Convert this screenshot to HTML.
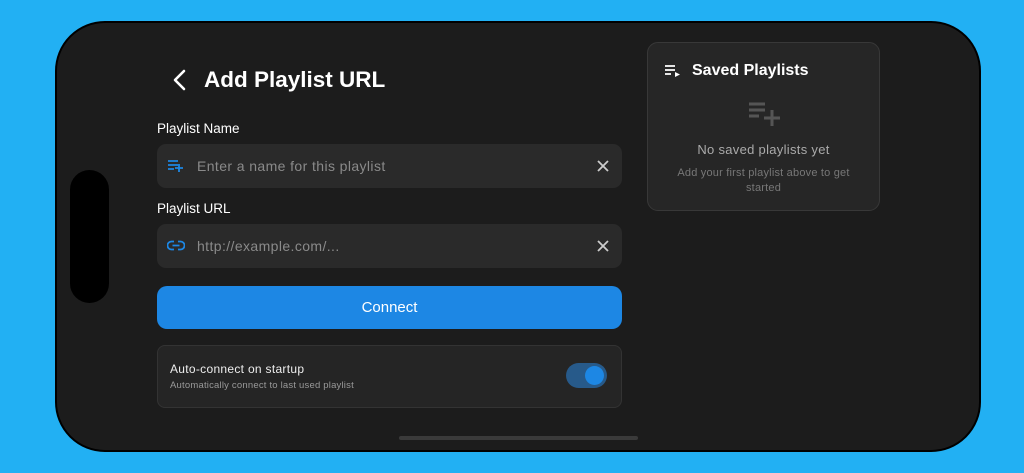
<!DOCTYPE html>
<html><head><meta charset="utf-8"><style>
*{margin:0;padding:0;box-sizing:border-box}
body{width:1024px;height:473px;background:#22b0f3;position:relative;overflow:hidden;font-family:"Liberation Sans",sans-serif}
.phone{position:absolute;left:55px;top:21px;width:926px;height:431px;background:#1c1c1c;border:2px solid #000;border-radius:50px}
.notch{position:absolute;left:70px;top:170px;width:39px;height:133px;background:#000;border-radius:20px}
.abs{position:absolute}
.title{left:204px;top:67px;color:#fff;font-size:22.5px;font-weight:bold}
.label{color:#fff;font-size:13.5px}
.field{left:157px;width:465px;height:44px;background:#2a2a2a;border-radius:9px}
.ph{position:absolute;left:40px;top:14px;color:#8a8a8a;font-size:14px;letter-spacing:.4px}
.x{position:absolute;right:12px;top:15px}
.btn{left:157px;top:286px;width:465px;height:43px;background:#1d87e4;border-radius:10px;color:#fff;font-size:15px;text-align:center;line-height:43px}
.card{left:157px;top:345px;width:465px;height:63px;background:#252525;border:1px solid #333;border-radius:8px}
.saved{left:647px;top:42px;width:233px;height:169px;background:#262626;border:1px solid #383838;border-radius:11px}
.bar{left:399px;top:436px;width:239px;height:4px;background:#3a3a3a;border-radius:2px}
</style></head><body>
<div class="phone"></div>
<div class="notch"></div>
<svg class="abs" style="left:170px;top:68px" width="20" height="24" viewBox="0 0 20 24"><path d="M14 3 L5 12 L14 21" stroke="#fff" stroke-width="2.6" fill="none" stroke-linecap="round" stroke-linejoin="round"/></svg>
<div class="abs title">Add Playlist URL</div>
<div class="abs label" style="left:157px;top:121px">Playlist Name</div>
<div class="abs field" style="top:144px">
<svg class="abs" style="left:11px;top:15px" width="16" height="14" viewBox="0 0 16 14"><path d="M0 2h10M0 6h10M0 10h6M11 5v8M7 9h8" stroke="#1d87e4" stroke-width="1.8" fill="none"/></svg>
<div class="ph">Enter a name for this playlist</div>
<svg class="x" width="14" height="14" viewBox="0 0 14 14"><path d="M2 2L12 12M12 2L2 12" stroke="#ccc" stroke-width="1.8"/></svg>
</div>
<div class="abs label" style="left:157px;top:201px">Playlist URL</div>
<div class="abs field" style="top:224px">
<svg class="abs" style="left:10px;top:16px" width="18" height="11" viewBox="0 0 18 11"><path d="M7 1.5H4.5a4 4 0 0 0 0 8H7M11 1.5h2.5a4 4 0 0 1 0 8H11M5.5 5.5h7" stroke="#1d87e4" stroke-width="1.8" fill="none"/></svg>
<div class="ph">http://example.com/...</div>
<svg class="x" width="14" height="14" viewBox="0 0 14 14"><path d="M2 2L12 12M12 2L2 12" stroke="#ccc" stroke-width="1.8"/></svg>
</div>
<div class="abs btn">Connect</div>
<div class="abs card">
<div class="abs" style="left:12px;top:16px;color:#eee;font-size:12px;letter-spacing:.3px">Auto-connect on startup</div>
<div class="abs" style="left:12px;top:34px;color:#999;font-size:9.5px;letter-spacing:.2px">Automatically connect to last used playlist</div>
<div class="abs" style="left:408px;top:17px;width:41px;height:25px;background:#275a8a;border-radius:13px"><div class="abs" style="left:19px;top:3px;width:19px;height:19px;background:#1d87e4;border-radius:50%"></div></div>
</div>
<div class="abs saved">
<svg class="abs" style="left:17px;top:21px" width="16" height="13" viewBox="0 0 16 13"><path d="M0 2h10M0 6h10M0 10h6" stroke="#fff" stroke-width="1.8"/><path d="M10 8l5 2.5-5 2.5z" fill="#fff"/></svg>
<div class="abs" style="left:44px;top:19px;color:#fff;font-size:16px;font-weight:bold">Saved Playlists</div>
<svg class="abs" style="left:101px;top:58px" width="32" height="26" viewBox="0 0 32 26"><path d="M0 3h16M0 9h16M0 15h10M23 9v16M15 17h16" stroke="#555" stroke-width="3" fill="none"/></svg>
<div class="abs" style="left:0;width:231px;top:99px;text-align:center;color:#aaa;font-size:13px;letter-spacing:.3px">No saved playlists yet</div>
<div class="abs" style="left:15px;width:201px;top:123px;text-align:center;color:#777;font-size:11px;line-height:15px;letter-spacing:.2px">Add your first playlist above to get started</div>
</div>
<div class="abs bar"></div>
</body></html>
